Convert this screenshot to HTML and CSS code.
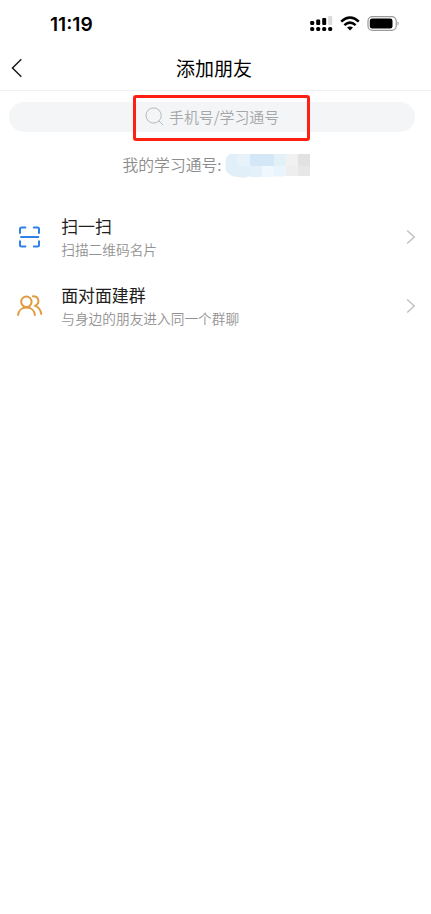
FILE: index.html
```html
<!DOCTYPE html>
<html lang="zh-CN">
<head>
<meta charset="utf-8">
<title>添加朋友</title>
<link rel="stylesheet" href="styles.css">
</head>
<body>
<header class="status">
  <time class="clock">11:19</time>
  <svg class="signals" width="92" height="18" viewBox="0 0 92 18">
    <rect x="0.2" y="6" width="4" height="4" rx="1.2"/>
    <rect x="6.2" y="4.6" width="4" height="5.4" rx="1.1"/>
    <rect x="12.2" y="3" width="4" height="7" rx="1"/>
    <rect class="faint" x="18.2" y="1" width="4" height="9" rx="1"/>
    <rect x="0.2" y="12" width="4" height="4" rx="1.5"/>
    <rect x="6.2" y="12" width="4" height="4" rx="1.5"/>
    <rect x="12.2" y="12" width="4" height="4" rx="1.5"/>
    <rect x="18.2" y="12" width="4" height="4" rx="1.5"/>
    <g class="waves"><path d="M31.2 6.6Q40-1.6 48.8 6.6"/><path d="M34.4 10.1Q40 5.1 45.6 10.1"/></g>
    <path d="M37 12.6Q40 10.3 43 12.6L40 15.5Z"/>
    <rect class="shell" x="58" y="1.7" width="28.2" height="13.6" rx="4.4"/>
    <rect x="59.8" y="3.5" width="22.7" height="10" rx="2.3"/>
    <path class="tip" d="M87.5 6.3Q90 8.5 87.5 10.7Z"/>
  </svg>
</header>
<nav class="navbar">
  <svg class="back" width="12" height="20" viewBox="0 0 12 20"><path d="M10.3 1.2L1.5 10L10.3 18.8"/></svg>
  <h1 class="title">添加朋友</h1>
</nav>
<main>
  <div class="search">
    <svg class="lens" width="20" height="20" viewBox="0 0 20 20"><circle cx="8.6" cy="8.5" r="7.6"/><path d="M14 14L18.2 18.2"/></svg>
    <span class="hint">手机号/学习通号</span>
    <div class="highlight"></div>
  </div>
  <div class="account">
    <span class="account-label">我的学习通号:</span>
    <svg class="mosaic" width="86" height="24" viewBox="0 0 86 24">
      <path fill="#e1eff9" d="M6 0H13V23Q7 23 3 19Q0.7 18 0.7 14V7Q1 1 6 0Z"/>
      <path fill="#e7f2fb" d="M13 0H25V12H13Z"/>
      <path fill="#d4e7f6" d="M25 0H49V12H25Z"/>
      <path fill="#e2f0f8" d="M49 0H61V12H49Z"/>
      <path fill="#e1eff9" d="M13 12H25V22Q19 25 13 23Z"/>
      <path fill="#e5f1fa" d="M25 12H37V23H25Z"/>
      <path fill="#f0f7fd" d="M37 12H49V23H37Z"/>
      <path fill="#e9f4fd" d="M49 12H61V22Q55 23 49 22Z"/>
      <path fill="#f1f1f1" d="M61 0H73V12H61Z"/>
      <path fill="#e2e2e2" d="M73 0H85V12H73Z"/>
      <path fill="#eeeeee" d="M61 12H73V22H61Z"/>
      <path fill="#e7e7e7" d="M73 12H85V22H73Z"/>
    </svg>
  </div>
  <ul class="menu">
    <li class="item">
      <svg class="icon scan" width="28" height="28" viewBox="0 0 28 28"><path d="M5 10V6Q5 4.5 6.5 4.5H10.4M18.8 4.5H22.5Q24 4.5 24 6V10M24 18.3V22Q24 23.5 22.5 23.5H18.8M10.4 23.5H6.5Q5 23.5 5 22V18.3M6 14H23.3"/></svg>
      <div class="text"><h2>扫一扫</h2><p>扫描二维码名片</p></div>
      <svg class="chevron" width="10" height="16" viewBox="0 0 10 16"><path d="M1.2 1.5L8.2 8L1.2 14.5"/></svg>
    </li>
    <li class="item">
      <svg class="icon group" width="28" height="28" viewBox="0 0 28 28"><circle cx="11.4" cy="9.8" r="5.2"/><path d="M3.1 23C3.5 18.6 6.8 15.6 11.5 15.6S19.5 18.6 19.9 23M17.9 4.3C24.2 4.3 25.2 10.8 20.3 13.9C23.8 15.2 25.6 18 26.3 21.9"/></svg>
      <div class="text"><h2>面对面建群</h2><p>与身边的朋友进入同一个群聊</p></div>
      <svg class="chevron" width="10" height="16" viewBox="0 0 10 16"><path d="M1.2 1.5L8.2 8L1.2 14.5"/></svg>
    </li>
  </ul>
</main>
</body>
</html>
```

FILE: styles.css
```css
* { box-sizing: border-box; }
body {
  margin: 0;
  min-height: 914px;
  background: #fff;
  color: #202020;
  font-family: "Noto Sans CJK SC", sans-serif;
  font-weight: 350;
}
svg { display: block; flex: none; }
h1, h2, p, ul { margin: 0; padding: 0; font-weight: inherit; }
.status {
  height: 46px;
  display: flex;
  align-items: flex-start;
  justify-content: space-between;
  padding: 15px 29.3px 0 50px;
}
.clock { font: 600 19.2px/19px Inter, sans-serif; color: #000; }
.faint { fill: #dadada; }
.waves { fill: none; stroke: #000; stroke-width: 2.5; }
.shell { fill: none; stroke: #999; stroke-width: 1.2; }
.tip { fill: #999; }
.navbar {
  height: 45px;
  display: grid;
  grid-template-columns: 34px 1fr 34px;
  align-items: center;
  padding: 0 3px 0 0;
  border-bottom: 1px solid #f1f1f1;
}
.back { margin-left: 11px; }
.back path { fill: none; stroke: #1b1b1b; stroke-width: 1.5; }
.title { font-size: 19px; line-height: 28px; text-align: center; color: #000; font-weight: 400; }
.search {
  position: relative;
  height: 30px;
  margin: 11px 16px 0 9px;
  border-radius: 15px;
  background: #f3f5f7;
  display: flex;
  align-items: center;
  padding-left: 136px;
  gap: 4px;
  font-size: 14.9px;
  color: #a4a6a8;
}
.hint { padding-bottom: 2px; }
.lens { fill: none; stroke: #b5b8bb; stroke-width: 1; }
.highlight {
  position: absolute;
  left: 124px;
  top: -7px;
  width: 177px;
  height: 46px;
  border: 3px solid #ff2014;
  border-radius: 3px;
}
.account {
  display: flex;
  height: 26px;
  margin-top: 21px;
  padding-left: 122.5px;
  gap: 3.5px;
  align-items: flex-start;
}
.account-label { width: 99px; font-size: 15.8px; line-height: 24px; color: #8c8c8c; white-space: nowrap; }
.mosaic { margin-top: 1px; }
.menu { list-style: none; margin-top: 23px; }
.item { display: flex; align-items: center; height: 69px; padding: 0 15px 0 15px; }
.icon { fill: none; stroke-width: 2; stroke-linecap: round; }
.scan { stroke: #2f80e8; }
.group { stroke: #e19c43; }
.text { flex: 1; padding-left: 18.2px; }
.text h2 { font-size: 16.9px; line-height: 24px; font-weight: 400; }
.text p { font-size: 13.7px; line-height: 22px; color: #929292; }
.chevron { fill: none; stroke: #c2c2c2; stroke-width: 1.5; }
```
